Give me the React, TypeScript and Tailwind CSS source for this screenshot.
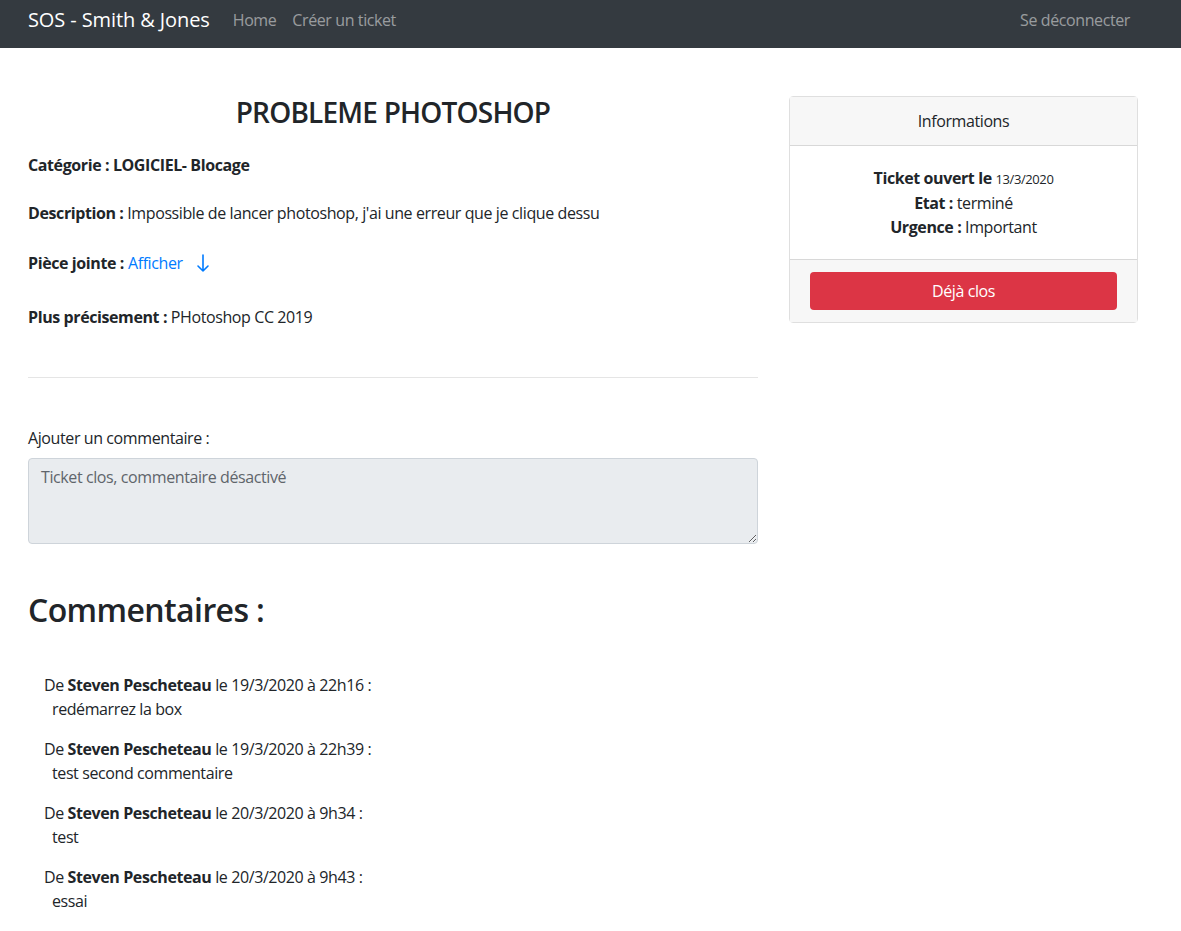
import * as React from "react";

const comments = [
  { date: "19/3/2020 à 22h16", text: "redémarrez la box" },
  { date: "19/3/2020 à 22h39", text: "test second commentaire" },
  { date: "20/3/2020 à 9h34", text: "test" },
  { date: "20/3/2020 à 9h43", text: "essai" },
];

const font = { fontFamily: '"Open Sans", "Noto Sans", sans-serif' };

export default function App() {
  return (
    <div
      className="min-h-[931px] w-full bg-white text-[16px] leading-6 tracking-[-0.4px] text-[#212529]"
      style={font}
    >
      <nav className="flex h-12 items-center bg-[#343a40] pb-2 pl-7 pr-[51px]">
        <span className="mr-[23px] text-[20px] tracking-[-0.1px] text-white">SOS - Smith &amp; Jones</span>
        <a className="mr-4 text-white/50">Home</a>
        <a className="text-white/50">Créer un ticket</a>
        <a className="ml-auto text-white/50">Se déconnecter</a>
      </nav>

      <main className="flex gap-[31px] pl-7 pt-12">
        <section className="w-[730px] shrink-0">
          <h3 className="mb-[23px] text-center text-[28px] font-semibold leading-[1.2] tracking-[-0.8px]">
            PROBLEME PHOTOSHOP
          </h3>
          <p className="font-bold">Catégorie : LOGICIEL- Blocage</p>
          <p className="mt-6">
            <b>Description :</b> Impossible de lancer photoshop, j'ai une erreur que je clique dessu
          </p>
          <p className="mt-[26px] flex items-center">
            <b>Pièce jointe :</b>
            <a className="ml-1 text-[#007bff]">Afficher</a>
            <svg
              className="ml-[12px]"
              width="16"
              height="20"
              viewBox="0 0 16 20"
              fill="none"
              stroke="#007bff"
              strokeWidth="1.6"
              strokeLinecap="round"
              strokeLinejoin="round"
            >
              <path d="M8 2v16M3 13l5 5 5-5" />
            </svg>
          </p>
          <p className="mt-[30px]">
            <b>Plus précisement :</b> PHotoshop CC 2019
          </p>
          <hr className="mt-[48px] border-t border-black/10" />
          <label className="mt-[48px] block">Ajouter un commentaire :</label>
          <textarea
            disabled
            placeholder="Ticket clos, commentaire désactivé"
            className="mt-2 block h-[86px] w-full resize-y rounded border border-[#ced4da] bg-[#e9ecef] px-3 py-[6px] tracking-[-0.4px] text-[#495057] placeholder:text-[#5f656b]"
            style={font}
          />
          <h2 className="mt-[47px] text-[32px] font-semibold leading-[1.2] tracking-[-0.6px]">Commentaires :</h2>
          <ul className="mt-[44px] flex flex-col gap-4 pl-4">
            {comments.map((c) => (
              <li key={c.date}>
                <div>
                  De <b>Steven Pescheteau</b> le {c.date} :
                </div>
                <div className="pl-2">{c.text}</div>
              </li>
            ))}
          </ul>
        </section>

        <aside className="w-[349px] shrink-0 self-start rounded border border-black/[0.125]">
          <div className="border-b border-black/[0.125] bg-[#f7f7f7] px-5 py-3 text-center">
            Informations
          </div>
          <div className="p-5 text-center">
            <div>
              <b>Ticket ouvert le</b> <span className="text-[13px]">13/3/2020</span>
            </div>
            <div>
              <b>Etat :</b> terminé
            </div>
            <div>
              <b>Urgence :</b> Important
            </div>
          </div>
          <div className="border-t border-black/[0.125] bg-[#f7f7f7] px-5 py-3">
            <button className="h-[38px] w-full rounded bg-[#dc3545] text-white">Déjà clos</button>
          </div>
        </aside>
      </main>
    </div>
  );
}
